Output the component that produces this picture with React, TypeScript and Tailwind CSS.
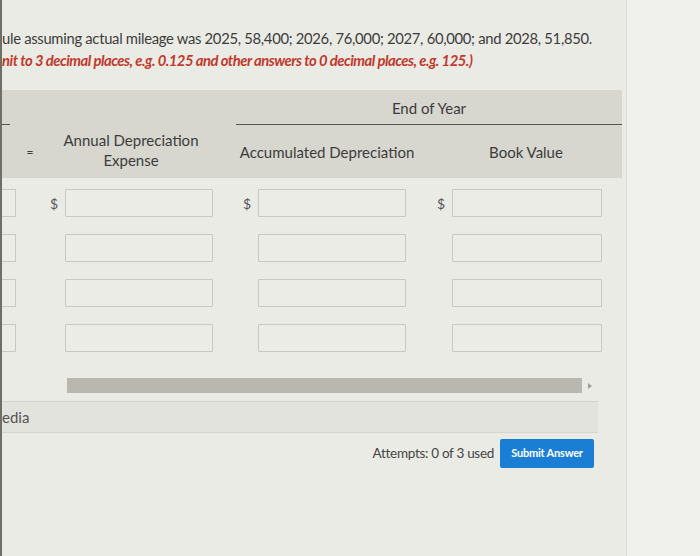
import React from 'react';

const rows = [0, 1, 2, 3];

function Box({ className = '' }: { className?: string }) {
  return <div className={`h-[28px] border border-[#c9c9c1] bg-[#ececE7] rounded-[1px] ${className}`} />;
}

export default function App() {
  return (
    <div className="w-[700px] h-[556px] flex bg-[#ebebe6] overflow-hidden font-['Lato','Open_Sans',sans-serif] text-[#3c3c3c]">
      <div className="w-[626px] shrink-0 border-l-2 border-[#6f6f6a] flex flex-col">
        {/* Instructions */}
        <div className="pt-[27px] text-[14.8px] leading-[22px] tracking-[-0.3px] whitespace-nowrap">
          <p>ule assuming actual mileage was 2025, 58,400; 2026, 76,000; 2027, 60,000; and 2028, 51,850.</p>
          <p className="text-[#c0392b] italic font-bold tracking-[-0.5px]">nit to 3 decimal places, e.g. 0.125 and other answers to 0 decimal places, e.g. 125.)</p>
        </div>

        {/* Table header */}
        <div className="mt-[19px] w-[620px] h-[88px] bg-[#d7d7cf] flex flex-col">
          <div className="h-[35px] flex">
            <div className="w-[8px] self-end border-b border-[#55554f]" />
            <div className="w-[226px]" />
            <div className="flex-1 flex items-center justify-center border-b border-[#55554f] text-[15px] pt-[2px]">
              End of Year
            </div>
          </div>
          <div className="flex-1 grid grid-cols-[36px_186px_206px_192px] items-center text-[15px] leading-[20px] text-center">
            <div className="text-[12px] pl-[20px]">=</div>
            <div className="pb-[3px]">Annual Depreciation<br />Expense</div>
            <div>Accumulated Depreciation</div>
            <div>Book Value</div>
          </div>
        </div>

        {/* Input rows */}
        <div className="mt-[11px] flex flex-col gap-[17px]">
          {rows.map((r) => (
            <div key={r} className="grid grid-cols-[14px_34px_15px_148px_30px_15px_148px_31px_15px_150px] items-center">
              <div className="h-[28px] border border-l-0 border-[#c9c9c1] bg-[#ececE7]" />
              <div />
              <div className="text-[14px] text-[#555]">{r === 0 ? '$' : ''}</div>
              <Box />
              <div />
              <div className="text-[14px] text-[#555]">{r === 0 ? '$' : ''}</div>
              <Box />
              <div />
              <div className="text-[14px] text-[#555]">{r === 0 ? '$' : ''}</div>
              <Box />
            </div>
          ))}
        </div>

        {/* Scrollbar */}
        <div className="mt-[26px] flex items-center">
          <div className="ml-[65px] w-[515px] h-[15px] bg-[#b8b8b0]" />
          <div className="ml-[6px] w-0 h-0 border-y-[3px] border-y-transparent border-l-[4px] border-l-[#a0a09a]" />
        </div>

        {/* Media band */}
        <div className="mt-[8px] w-[596px] h-[32px] bg-[#e3e3dd] border-y border-[#d5d5ce] flex items-center text-[15px] text-[#555]">
          edia
        </div>

        {/* Footer */}
        <div className="mt-[6px] w-[592px] flex items-center justify-end gap-[6px]">
          <span className="text-[13.5px] text-[#444] tracking-[-0.3px]">Attempts: 0 of 3 used</span>
          <button className="w-[94px] h-[29px] rounded-[2px] bg-[#1a7fd4] text-white text-[11px] font-bold tracking-[-0.2px]">
            Submit Answer
          </button>
        </div>
      </div>
      <div className="flex-1 bg-[#f0f0ed] border-l border-[#dcdcd6]" />
    </div>
  );
}
